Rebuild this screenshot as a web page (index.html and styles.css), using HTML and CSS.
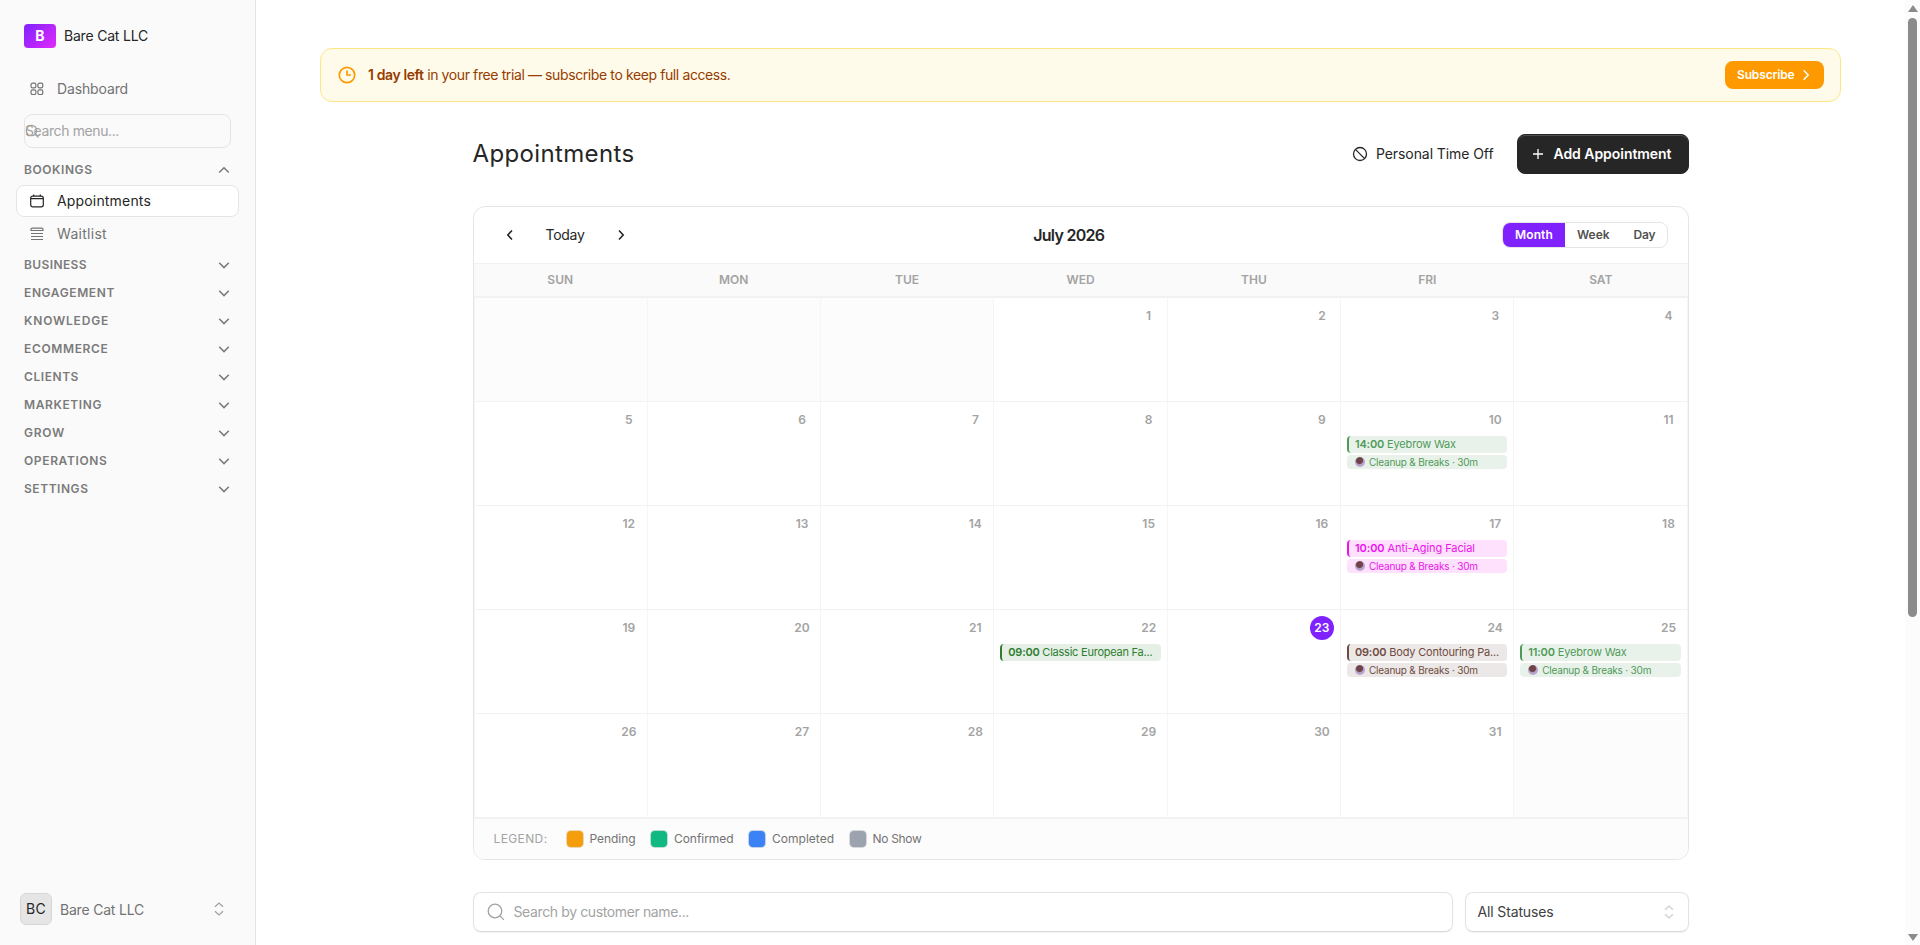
FILE: index.html
```html
<!DOCTYPE html>
<html lang="en">
<head>
  <meta charset="UTF-8">
  <meta name="viewport" content="width=device-width, initial-scale=1.0">
  <title>Appointments</title>
  <link rel="stylesheet" href="styles.css">
</head>
<body>
  <!-- Sidebar -->
  <aside class="sidebar">
    <div class="brand">
      <span class="brand-logo">B</span>
      <span class="brand-name"><span class="t" data-w="84">Bare Cat LLC</span></span>
    </div>

    <a class="nav-item dashboard">
      <svg width="14" height="14" viewBox="0 0 14 14"><rect x="1" y="1.2" width="4.9" height="4.6" rx="1.6"/><rect x="7.9" y="1.2" width="4.9" height="4.6" rx="1.6"/><rect x="1" y="7.9" width="4.9" height="4.6" rx="1.6"/><rect x="7.9" y="7.9" width="4.9" height="4.6" rx="1.6"/></svg>
      <span class="t" data-w="71">Dashboard</span>
    </a>

    <div class="menu-search">
      <svg class="menu-search-icon" width="16" height="16" viewBox="0 0 16 16"><circle cx="6.5" cy="6.5" r="5.2"/><path d="M10.3 10.3l3.2 3.2"/></svg>
      <span class="t" data-w="94">Search menu...</span>
    </div>

    <div class="group"><span class="t" data-w="68.5">BOOKINGS</span><svg width="12" height="12" viewBox="0 0 12 12"><path d="M1.2 8.6L6 3.7l4.8 4.9"/></svg></div>
    <a class="nav-item active">
      <svg width="14" height="14" viewBox="0 0 14 14"><rect x=".7" y="2.2" width="12.6" height="10.6" rx="2"/><path d="M.7 4.7h12.6M3.7 .5v1.7M10.3 .5v1.7"/></svg>
      <span class="t" data-w="94">Appointments</span>
    </a>
    <a class="nav-item">
      <svg width="14" height="14" viewBox="0 0 14 14"><path d="M1 3.5V2.5q0-1.3 1.3-1.3h9.4q1.3 0 1.3 1.3v1zM1 6.5h12M1 9.5h12M1 12.5h12"/></svg>
      <span class="t" data-w="50">Waitlist</span>
    </a>

    <div class="groups">
      <div class="group"><span class="t" data-w="63">BUSINESS</span><svg width="12" height="12" viewBox="0 0 12 12"><path d="M1.2 3.7L6 8.6l4.8-4.9"/></svg></div>
      <div class="group"><span class="t" data-w="91">ENGAGEMENT</span><svg width="12" height="12" viewBox="0 0 12 12"><path d="M1.2 3.7L6 8.6l4.8-4.9"/></svg></div>
      <div class="group"><span class="t" data-w="85">KNOWLEDGE</span><svg width="12" height="12" viewBox="0 0 12 12"><path d="M1.2 3.7L6 8.6l4.8-4.9"/></svg></div>
      <div class="group"><span class="t" data-w="84.5">ECOMMERCE</span><svg width="12" height="12" viewBox="0 0 12 12"><path d="M1.2 3.7L6 8.6l4.8-4.9"/></svg></div>
      <div class="group"><span class="t" data-w="55">CLIENTS</span><svg width="12" height="12" viewBox="0 0 12 12"><path d="M1.2 3.7L6 8.6l4.8-4.9"/></svg></div>
      <div class="group"><span class="t" data-w="78">MARKETING</span><svg width="12" height="12" viewBox="0 0 12 12"><path d="M1.2 3.7L6 8.6l4.8-4.9"/></svg></div>
      <div class="group"><span class="t" data-w="41">GROW</span><svg width="12" height="12" viewBox="0 0 12 12"><path d="M1.2 3.7L6 8.6l4.8-4.9"/></svg></div>
      <div class="group"><span class="t" data-w="83.5">OPERATIONS</span><svg width="12" height="12" viewBox="0 0 12 12"><path d="M1.2 3.7L6 8.6l4.8-4.9"/></svg></div>
      <div class="group"><span class="t" data-w="64.5">SETTINGS</span><svg width="12" height="12" viewBox="0 0 12 12"><path d="M1.2 3.7L6 8.6l4.8-4.9"/></svg></div>
    </div>

    <div class="account">
      <span class="avatar"><span class="t" data-w="20">BC</span></span>
      <span class="t" data-w="84">Bare Cat LLC</span>
      <svg width="10" height="14" viewBox="0 0 10 14"><path d="M1 4.7l4-3.6 4 3.6M1 9.3l4 3.6 4-3.6"/></svg>
    </div>
  </aside>

  <main class="main">
    <div class="trial">
      <svg width="18" height="18" viewBox="0 0 18 18"><circle cx="9" cy="9" r="7.7"/><path d="M9 4.4V9h4"/></svg>
      <p><span class="t" data-w="362.5"><b>1 day left</b> in your free trial — subscribe to keep full access.</span></p>
      <button class="subscribe"><span class="t" data-w="57.5">Subscribe</span><svg width="8" height="12" viewBox="0 0 8 12"><path d="M1.6 1.2l4.6 4.8-4.6 4.8"/></svg></button>
    </div>

    <div class="page">
      <header class="page-head">
        <h1><span class="t" data-w="162">Appointments</span></h1>
        <button class="time-off">
          <svg width="16" height="16" viewBox="0 0 16 16"><circle cx="8" cy="8" r="6.5"/><path d="M3.4 3.4l9.2 9.2"/></svg>
          <span class="t" data-w="117.5">Personal Time Off</span>
        </button>
        <button class="add">
          <svg width="12" height="12" viewBox="0 0 12 12"><path d="M6 1v10M1 6h10"/></svg>
          <span class="t" data-w="118">Add Appointment</span>
        </button>
      </header>

      <section class="calendar">
        <div class="toolbar">
          <div class="pager">
            <svg width="8" height="12" viewBox="0 0 8 12"><path d="M6 1.5L1.8 6 6 10.5"/></svg>
            <span class="t" data-w="39">Today</span>
            <svg width="8" height="12" viewBox="0 0 8 12"><path d="M2 1.5L6.2 6 2 10.5"/></svg>
          </div>
          <h2><span class="t" data-w="71">July 2026</span></h2>
          <div class="views">
            <span class="view on"><span class="t" data-w="38">Month</span></span>
            <span class="view"><span class="t" data-w="32.5">Week</span></span>
            <span class="view"><span class="t" data-w="22">Day</span></span>
          </div>
        </div>
        <div class="weekdays">
          <span>SUN</span><span>MON</span><span>TUE</span><span>WED</span><span>THU</span><span>FRI</span><span>SAT</span>
        </div>
        <div class="days" id="days"></div>
        <footer class="legend">
          <span class="t legend-title" data-w="54">LEGEND:</span>
          <div class="legend-item"><i class="swatch pending"></i><span class="t" data-w="46">Pending</span></div>
          <div class="legend-item"><i class="swatch confirmed"></i><span class="t" data-w="59.5">Confirmed</span></div>
          <div class="legend-item"><i class="swatch completed"></i><span class="t" data-w="62">Completed</span></div>
          <div class="legend-item"><i class="swatch no-show"></i><span class="t" data-w="49">No Show</span></div>
        </footer>
      </section>

      <div class="filters">
        <div class="field search">
          <svg width="18" height="18" viewBox="0 0 18 18"><circle cx="8" cy="8" r="6.8"/><path d="M12.9 12.9l4 4"/></svg>
          <span class="t" data-w="175.5">Search by customer name...</span>
        </div>
        <div class="field status">
          <span class="t" data-w="76">All Statuses</span>
          <svg width="10" height="14" viewBox="0 0 10 14"><path d="M1 4.7l4-3.6 4 3.6M1 9.3l4 3.6 4-3.6"/></svg>
        </div>
      </div>
    </div>
  </main>

  <div class="scrollbar">
    <span class="arrow up"></span>
    <span class="thumb"></span>
    <span class="arrow down"></span>
  </div>

  <script src="calendar.js"></script>
</body>
</html>
```
FILE: calendar.js
```js
const today = 23;
const startOffset = 3; // July 2026 starts on a Wednesday

const bookings = {
  10: { time: "14:00", name: "Eyebrow Wax", color: "green", width: 101, cleanup: true },
  17: { time: "10:00", name: "Anti-Aging Facial", color: "pink", width: 120, cleanup: true },
  22: { time: "09:00", name: "Classic European Fa...", color: "forest", width: 144, cleanup: false },
  24: { time: "09:00", name: "Body Contouring Pa...", color: "brown", width: 144, cleanup: true },
  25: { time: "11:00", name: "Eyebrow Wax", color: "green", width: 98.5, cleanup: true }
};

const days = document.getElementById("days");

for (let i = 0; i < 35; i++) {
  const date = i - startOffset + 1;
  const cell = document.createElement("div");
  cell.className = "day";

  if (date < 1 || date > 31) {
    cell.classList.add("outside");
    days.appendChild(cell);
    continue;
  }

  let html = `<span class="date${date === today ? " today" : ""}">${date}</span>`;
  const b = bookings[date];
  if (b) {
    html += `<div class="event ${b.color}"><span class="t" data-w="${b.width}"><b>${b.time}</b> ${b.name}</span></div>`;
    if (b.cleanup) {
      html += `<div class="cleanup ${b.color}"><i class="dot"></i><span class="t" data-w="109">Cleanup &amp; Breaks · 30m</span></div>`;
    }
  }
  cell.innerHTML = html;
  days.appendChild(cell);
}

// Track each label so it fills its intended width
document.querySelectorAll(".t").forEach(el => {
  const diff = Number(el.dataset.w) - el.getBoundingClientRect().width;
  el.style.letterSpacing = diff / el.textContent.length + "px";
});
```
FILE: styles.css
```css
* {
  box-sizing: border-box;
}

body {
  margin: 0;
  height: 945px;
  overflow: hidden;
  display: flex;
  font-family: Inter, "Liberation Sans", sans-serif;
  font-size: 14px;
  color: #262626;
  background: #fff;
}

svg {
  fill: none;
  stroke: currentColor;
  stroke-width: 1.3;
  flex-shrink: 0;
}

button {
  font: inherit;
  border: none;
  background: none;
  padding: 0;
  display: flex;
  align-items: center;
}

h1, h2, p {
  margin: 0;
}

b {
  font-weight: 600;
}

.t {
  display: inline-block;
  padding-bottom: 2px;
  white-space: nowrap;
}

/* Sidebar */
.sidebar {
  width: 256px;
  flex-shrink: 0;
  background: #fafafa;
  border-right: 1px solid #e4e4e4;
  padding: 24px 16px 16px;
  display: flex;
  flex-direction: column;
}

.brand {
  display: flex;
  align-items: center;
  gap: 8px;
  height: 24px;
  padding-left: 8px;
  margin-bottom: 49px;
}

.brand-name {
  font-weight: 400;
}

.brand-logo {
  width: 32px;
  height: 24px;
  border-radius: 4px;
  background: linear-gradient(135deg, #7f22fe, #e12afb);
  color: #fff;
  font-weight: 700;
  text-align: center;
  line-height: 24px;
}

.nav-item {
  display: flex;
  align-items: center;
  gap: 13px;
  height: 32px;
  padding-left: 13px;
  border: 1px solid transparent;
  border-radius: 8px;
  color: #737373;
  font-weight: 400;
}

.sidebar .nav-item svg {
  stroke-width: 1.2;
}

.dashboard {
  height: 32px;
  margin: -24px 0 9px;
}

.menu-search {
  position: relative;
  height: 34px;
  margin: 0 8px 8px 8px;
  width: 207px;
  border: 1px solid #e5e5e5;
  border-radius: 8px;
  line-height: 32px;
  color: #a3a3a3;
}

.menu-search-icon {
  position: absolute;
  left: 0;
  top: 9px;
}

.group {
  display: flex;
  align-items: center;
  justify-content: space-between;
  height: 28px;
  padding: 0 9px 0 8px;
  font-size: 12px;
  font-weight: 600;
  color: #7b7b7b;
}

.group svg {
  stroke-width: 1.5;
}

.groups {
  margin-top: 1px;
}

.active {
  margin: 1px 0;
  width: 223px;
  background: #fff;
  border-color: #e5e5e5;
  color: #262626;
}

.account {
  display: flex;
  align-items: center;
  gap: 8px;
  height: 40px;
  margin-top: auto;
  padding: 0 15px 0 4px;
  color: #737373;
  font-weight: 400;
}

.account .t {
  padding-bottom: 0;
}

.account svg {
  margin-left: auto;
  color: #a0a0a0;
}

.avatar {
  width: 32px;
  height: 32px;
  border: 1px solid #d6d6d6;
  border-radius: 6px;
  background: #e5e5e5;
  color: #262626;
  font-weight: 400;
  line-height: 30px;
  text-align: center;
}

/* Main column */
.main {
  flex: 1;
  padding: 48px 64px 0;
}

.trial {
  display: flex;
  align-items: center;
  height: 54px;
  padding: 0 16px 0 17px;
  border: 1px solid #fee685;
  border-radius: 12px;
  background: #fffbeb;
  color: #973c00;
  font-size: 14px;
}

.trial > svg {
  margin-right: 12px;
  color: #fe9a00;
  stroke-width: 1.7;
}

.subscribe {
  margin-left: auto;
  height: 28px;
  width: 99px;
  gap: 7px;
  padding-left: 12px;
  border-radius: 8px;
  background: #fe9a00;
  color: #fff;
  font-size: 12px;
  font-weight: 600;
}

.subscribe svg {
  stroke-width: 1.5;
}

.page {
  width: 1216px;
  margin: 32px auto 0;
}

.page-head {
  display: flex;
  align-items: center;
  height: 40px;
  margin-bottom: 32px;
}

h1 {
  font-size: 24px;
  font-weight: 400;
}

.time-off {
  margin-left: auto;
  gap: 8px;
  margin-right: 23px;
  color: #262626;
  font-weight: 400;
}

.add {
  width: 172px;
  height: 40px;
  padding-left: 14px;
  gap: 10px;
  border: 1px solid #262626;
  border-radius: 8px;
  background: #262626;
  box-shadow: inset 0 1px 0 #4d4d4d;
  color: #fff;
  font-weight: 600;
}

.calendar {
  height: 654px;
  border: 1px solid #e5e5e5;
  border-radius: 12px;
  overflow: hidden;
}

.toolbar {
  display: flex;
  justify-content: space-between;
  align-items: center;
  height: 57px;
  padding: 0 19px 0 20px;
  border-bottom: 1px solid #f2f2f2;
}

.pager {
  display: flex;
  align-items: center;
  gap: 32px;
  width: 142px;
  padding-left: 12px;
  font-weight: 400;
}

.pager svg {
  stroke-width: 1.6;
}

h2 {
  font-size: 16px;
  font-weight: 600;
}

h2 .t {
  padding-bottom: 0;
}

.views {
  display: flex;
  height: 26px;
  border: 1px solid #e5e5e5;
  border-radius: 8px;
  overflow: hidden;
  font-size: 12px;
  font-weight: 600;
  color: #525252;
}

.view {
  display: flex;
  align-items: center;
  padding: 0 12px;
}

.on {
  background: #7f22fe;
  color: #fff;
}

.weekdays {
  display: grid;
  grid-template-columns: repeat(7, 1fr);
  height: 33px;
  background: #fafafa;
  border-bottom: 1px solid #f2f2f2;
  color: #a3a3a3;
  font-size: 12px;
  font-weight: 600;
  line-height: 31px;
  text-align: center;
}

.days {
  display: grid;
  grid-template-columns: repeat(7, 1fr);
  grid-auto-rows: 104px;
  border-left: 1px solid #f5f5f5;
  border-top: 1px solid #f2f2f2;
}

.day {
  display: flex;
  flex-direction: column;
  min-width: 0;
  padding: 6px;
  border-right: 1px solid #f5f5f5;
  border-bottom: 1px solid #f2f2f2;
}

.outside {
  background: #fcfcfc;
}

.date {
  align-self: flex-end;
  min-width: 24px;
  height: 24px;
  margin-bottom: 4px;
  border-radius: 12px;
  color: #a3a3a3;
  font-size: 12px;
  font-weight: 600;
  line-height: 24px;
  text-align: center;
}

.today {
  background: #7f22fe;
  color: #fff;
}

.event {
  height: 17px;
  margin-bottom: 2px;
  padding-left: 6px;
  border-left: 2px solid;
  border-radius: 4px;
  font-size: 11px;
  line-height: 17px;
  font-weight: 400;
}

.cleanup {
  display: flex;
  align-items: center;
  gap: 4px;
  height: 14px;
  padding-left: 8px;
  border-radius: 4px;
  font-size: 10px;
  font-weight: 400;
}

.event .t, .cleanup .t {
  padding-bottom: 0;
}

.dot {
  width: 10px;
  height: 10px;
  border-radius: 5px;
  background: radial-gradient(circle at 45% 35%, #70434b 35%, #b9a6ce 50%);
}

.green {
  color: #4f9a59;
  background: #e9f2ea;
}

.pink {
  color: #ec13ec;
  background: #fde1fd;
}

.forest {
  color: #2e7d32;
  background: #e5efe5;
}

.brown {
  color: #6d4c41;
  background: #ede8e8;
}

.legend {
  display: flex;
  align-items: center;
  gap: 14.5px;
  height: 41px;
  padding-left: 20px;
  border-top: 1px solid #f2f2f2;
  background: #fcfcfc;
  color: #a3a3a3;
  font-size: 12px;
}

.legend-title {
  margin-right: 3.5px;
}

.legend-item {
  display: flex;
  align-items: center;
  gap: 6px;
  color: #737373;
}

.swatch {
  width: 18px;
  height: 18px;
  border: 1px solid rgba(229, 229, 229, .8);
  border-radius: 5px;
}

.pending {
  background: #f59e0b;
}

.confirmed {
  background: #10b981;
}

.completed {
  background: #3b82f6;
}

.no-show {
  background: #9ca3af;
}

.filters {
  display: flex;
  gap: 12px;
  margin-top: 32px;
}

.field {
  display: flex;
  align-items: center;
  height: 40px;
  border: 1px solid #e3e3e3;
  border-bottom-color: #d8d8d8;
  border-radius: 8px;
  box-shadow: 0 1px 2px rgba(0, 0, 0, .05);
}

.search {
  flex: 1;
  gap: 9px;
  padding-left: 13px;
  color: #a3a3a3;
}

.status {
  width: 224px;
  justify-content: space-between;
  padding: 0 14px 0 12px;
  color: #404040;
}

.status svg {
  color: #cfcfcf;
}

/* Scrollbar */
.scrollbar {
  width: 15px;
  flex-shrink: 0;
  display: flex;
  flex-direction: column;
  align-items: center;
  padding: 5px 0 4px 0;
  background: #fcfcfc;
}

.arrow {
  border: 5px solid transparent;
}

.up {
  border-top: 0;
  border-bottom: 7px solid #8b8b8b;
}

.thumb {
  width: 9px;
  height: 599px;
  margin-top: 6px;
  border-radius: 5px;
  background: #8b8b8b;
}

.down {
  margin-top: auto;
  border-bottom: 0;
  border-top: 7px solid #8b8b8b;
}
```
